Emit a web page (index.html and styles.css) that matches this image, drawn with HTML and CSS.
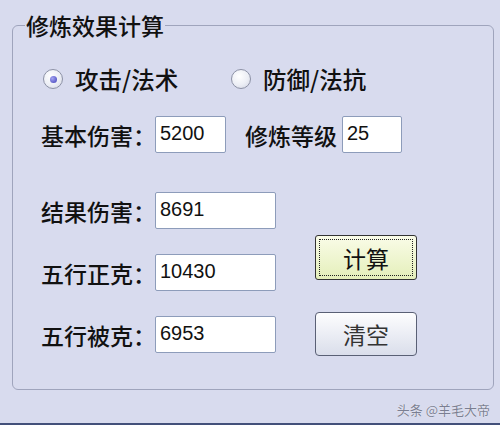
FILE: index.html
```html
<!DOCTYPE html>
<html lang="zh-CN">
<head>
<meta charset="utf-8">
<title>修炼效果计算</title>
<link rel="stylesheet" href="styles.css">
</head>
<body>
<div class="window">
  <fieldset class="group">
    <legend class="group-title">修炼效果计算</legend>
    <div class="radio-row">
      <label class="option option-first"><span class="radio checked"></span><span>攻击/法术</span></label>
      <label class="option"><span class="radio"></span><span>防御/法抗</span></label>
    </div>
    <div class="field-row row-base">
      <span class="label label-wide">基本伤害：</span>
      <input class="box box-short" type="text" value="5200">
      <span class="label label-level">修炼等级</span>
      <input class="box box-level" type="text" value="25">
    </div>
    <div class="lower">
      <div class="results">
        <div class="field-row">
          <span class="label label-wide">结果伤害：</span>
          <input class="box box-wide" type="text" value="8691">
        </div>
        <div class="field-row">
          <span class="label label-wide">五行正克：</span>
          <input class="box box-wide" type="text" value="10430">
        </div>
        <div class="field-row">
          <span class="label label-wide">五行被克：</span>
          <input class="box box-wide" type="text" value="6953">
        </div>
      </div>
      <div class="buttons">
        <button class="btn btn-calc" type="button">计算</button>
        <button class="btn btn-clear" type="button">清空</button>
      </div>
    </div>
  </fieldset>
  <div class="credit">头条 @羊毛大帝</div>
</div>
</body>
</html>
```

FILE: styles.css
```css
html, body {
  margin: 0;
  padding: 0;
}

body {
  background: #d8dbee;
  font-family: "Noto Sans CJK SC", "Noto Sans", sans-serif;
  color: #111;
}

.window {
  height: 425px;
  box-sizing: border-box;
  padding-top: 12px;
  border-bottom: 2px solid #43507a;
  overflow: hidden;
}

.group {
  margin: 0 0 0 12px;
  width: 482px;
  min-width: 0;
  box-sizing: border-box;
  border: 1px solid #9fa4bc;
  border-radius: 6px;
  padding: 0 0 33px 0;
}

.group-title {
  margin-left: 12px;
  padding: 0 1px;
  font-size: 23px;
  font-weight: 500;
  line-height: 26px;
  color: #111;
}

.radio-row {
  display: flex;
  align-items: center;
  height: 24px;
  margin-top: 29px;
  padding-left: 30px;
}

.option {
  display: flex;
  align-items: center;
  gap: 12px;
  font-size: 23.5px;
  font-weight: 500;
  line-height: 26px;
  color: #111;
}

.option-first {
  width: 188px;
}

.radio {
  width: 20px;
  height: 20px;
  box-sizing: border-box;
  border-radius: 50%;
  border: 1px solid #8d92a6;
  background: radial-gradient(circle at 40% 35%, #ffffff 0%, #eceef5 55%, #cfd2e0 100%);
  display: flex;
  align-items: center;
  justify-content: center;
}

.radio.checked::after {
  content: "";
  width: 7px;
  height: 7px;
  border-radius: 50%;
  background: radial-gradient(circle at 35% 35%, #a4a4f2, #3f3fb8);
}

.field-row {
  display: flex;
  align-items: center;
  height: 37px;
}

.row-base {
  margin-top: 25px;
  padding-left: 28px;
}

.label {
  font-size: 23px;
  font-weight: 500;
  line-height: 26px;
  color: #111;
  white-space: nowrap;
}

.label-wide {
  width: 114px;
  flex: 0 0 114px;
}

.label-level {
  margin-left: 19px;
  width: 97px;
  flex: 0 0 97px;
}

.box {
  height: 37px;
  box-sizing: border-box;
  margin: 0;
  border: 1px solid #8d9cba;
  border-radius: 2px;
  background: #fff;
  font-family: "Liberation Sans", Arial, sans-serif;
  font-size: 20px;
  color: #111;
  padding: 0 0 3px 4px;
  outline: none;
}

.box-short {
  width: 71px;
}

.box-level {
  width: 60px;
}

.box-wide {
  width: 121px;
}

.lower {
  display: flex;
  margin-top: 39px;
  padding-left: 28px;
}

.results {
  display: flex;
  flex-direction: column;
  gap: 25px;
}

.buttons {
  display: flex;
  flex-direction: column;
  gap: 32px;
  margin-left: 39px;
  padding-top: 43px;
}

.btn {
  width: 102px;
  height: 45px;
  margin: 0;
  padding: 0;
  font-family: "Noto Sans CJK SC", sans-serif;
  font-size: 23px;
  font-weight: 400;
  border-radius: 3px;
  cursor: pointer;
}

.btn-calc {
  border: 1px solid #333;
  background: linear-gradient(#fafce8, #e4efba);
  outline: 1px dotted #222;
  outline-offset: -5px;
  color: #111;
}

.btn-clear {
  height: 44px;
  border: 1px solid #5a6075;
  border-radius: 4px;
  background: linear-gradient(#fdfdfe, #dadeeb);
  color: #333;
}

.credit {
  margin-top: 12px;
  padding-right: 10px;
  text-align: right;
  font-size: 13px;
  line-height: 16px;
  color: #7b7f92;
  text-shadow: 0 0 1px #fff;
}
```
